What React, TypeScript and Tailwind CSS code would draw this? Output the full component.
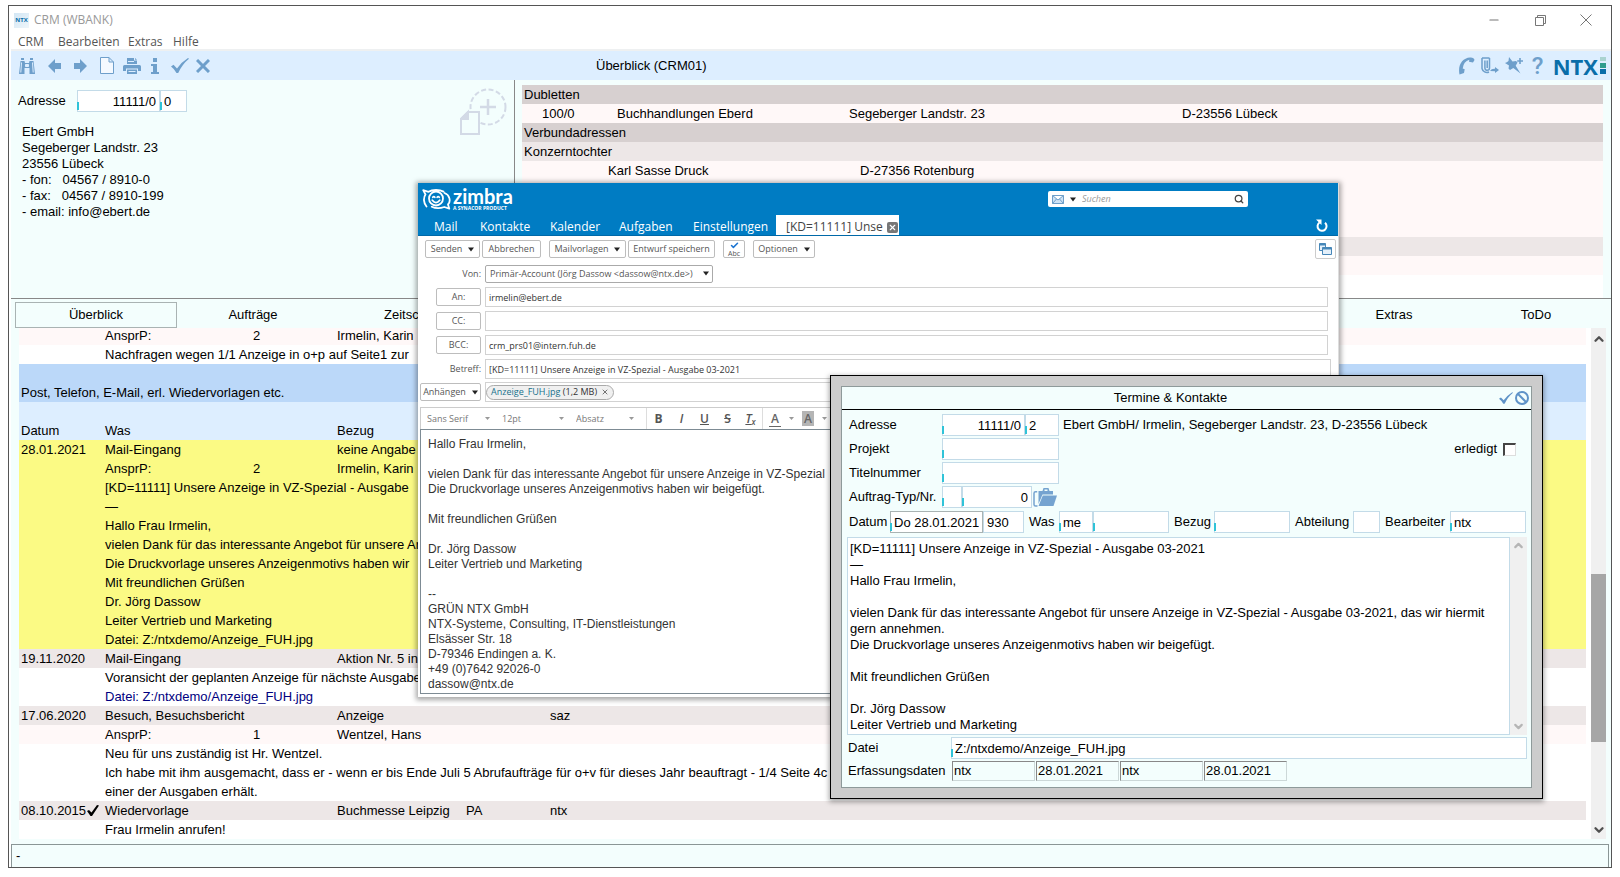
import React from 'react';
import { Check, ChevronDown, ChevronUp, Minus, Search, X } from 'lucide-react';

const crm = "font-['Liberation_Sans',Arial,sans-serif] text-[13px] text-black";
const segoe = "font-['Open_Sans','Noto_Sans',sans-serif]";

interface JournalRow {
  bg: string;
  date?: string;
  done?: boolean;
  text?: string;
  link?: boolean;
  cells?: [string, string, string, string, string];
}

const YELLOW = 'bg-[#fbfa84]';
const GREY = 'bg-[#ede7e7]';
const ROSE = 'bg-[#fff8f8]';
const BLUE = 'bg-[#bbd8f9]';
const PALE = 'bg-[#ddeeff]';
const WHITE = 'bg-white';

const journal: JournalRow[] = [
  { bg: ROSE, cells: ['AnsprP:', '2', 'Irmelin, Karin', '', ''] },
  { bg: WHITE, text: 'Nachfragen wegen 1/1 Anzeige in o+p auf Seite1 zur' },
  { bg: BLUE },
  { bg: BLUE, date: 'Post, Telefon, E-Mail, erl. Wiedervorlagen etc.' },
  { bg: PALE },
  { bg: PALE, date: 'Datum', cells: ['Was', '', 'Bezug', '', ''] },
  { bg: YELLOW, date: '28.01.2021', cells: ['Mail-Eingang', '', 'keine Angabe', '', ''] },
  { bg: YELLOW, cells: ['AnsprP:', '2', 'Irmelin, Karin', '', ''] },
  { bg: YELLOW, text: '[KD=11111] Unsere Anzeige in VZ-Spezial - Ausgabe' },
  { bg: YELLOW, text: '—' },
  { bg: YELLOW, text: 'Hallo Frau Irmelin,' },
  { bg: YELLOW, text: 'vielen Dank für das interessante Angebot für unsere An' },
  { bg: YELLOW, text: 'Die Druckvorlage unseres Anzeigenmotivs haben wir' },
  { bg: YELLOW, text: 'Mit freundlichen Grüßen' },
  { bg: YELLOW, text: 'Dr. Jörg Dassow' },
  { bg: YELLOW, text: 'Leiter Vertrieb und Marketing' },
  { bg: YELLOW, text: 'Datei: Z:/ntxdemo/Anzeige_FUH.jpg' },
  { bg: GREY, date: '19.11.2020', cells: ['Mail-Eingang', '', 'Aktion Nr. 5 in', '', ''] },
  { bg: WHITE, text: 'Voransicht der geplanten Anzeige für nächste Ausgabe' },
  { bg: WHITE, text: 'Datei: Z:/ntxdemo/Anzeige_FUH.jpg', link: true },
  { bg: GREY, date: '17.06.2020', cells: ['Besuch, Besuchsbericht', '', 'Anzeige', '', 'saz'] },
  { bg: ROSE, cells: ['AnsprP:', '1', 'Wentzel, Hans', '', ''] },
  { bg: WHITE, text: 'Neu für uns zuständig ist Hr. Wentzel.' },
  { bg: WHITE, text: 'Ich habe mit ihm ausgemacht, dass er - wenn er bis Ende Juli 5 Abrufaufträge für o+v für dieses Jahr beauftragt - 1/4 Seite 4c' },
  { bg: WHITE, text: 'einer der Ausgaben erhält.' },
  { bg: GREY, date: '08.10.2015', done: true, cells: ['Wiedervorlage', '', 'Buchmesse Leipzig', 'PA', 'ntx'] },
  { bg: WHITE, text: 'Frau Irmelin anrufen!' },
];

const mailBody = `Hallo Frau Irmelin,

vielen Dank für das interessante Angebot für unsere Anzeige in VZ-Spezial
Die Druckvorlage unseres Anzeigenmotivs haben wir beigefügt.

Mit freundlichen Grüßen

Dr. Jörg Dassow
Leiter Vertrieb und Marketing

--
GRÜN NTX GmbH
NTX-Systeme, Consulting, IT-Dienstleistungen
Elsässer Str. 18
D-79346 Endingen a. K.
+49 (0)7642 92026-0
dassow@ntx.de`;

const noteBody = `[KD=11111] Unsere Anzeige in VZ-Spezial - Ausgabe 03-2021
—
Hallo Frau Irmelin,

vielen Dank für das interessante Angebot für unsere Anzeige in VZ-Spezial - Ausgabe 03-2021, das wir hiermit
gern annehmen.
Die Druckvorlage unseres Anzeigenmotivs haben wir beigefügt.

Mit freundlichen Grüßen

Dr. Jörg Dassow
Leiter Vertrieb und Marketing`;

/* ---------- small parts ---------- */

interface FieldProps {
  id: string;
  width: string;
  value?: string;
  label?: string;
  tick?: boolean;
  right?: boolean;
  frame?: string;
}

// CRM entry field, the cyan tick marks a field with a lookup list
const Field: React.FC<FieldProps> = ({ id, width, value = '', label, tick, right, frame = 'border-[#c3dbe8]' }) => (
  <span className={`relative block h-[22px] shrink-0 ${width}`}>
    <input
      id={id}
      aria-label={label}
      defaultValue={value}
      className={`block h-full w-full border bg-white px-[3px] outline-none ${frame} ${right ? 'text-right' : ''}`}
    />
    {tick && <span className="absolute bottom-0.5 left-0 h-2 w-0.5 bg-[#2fc3d8]"></span>}
  </span>
);

const Caret = () => (
  <svg width="6" height="5" viewBox="0 0 6 5" className="shrink-0"><path d="M0 0.5h6L3 4.5z" fill="#222" /></svg>
);

const MailButton: React.FC<{ children: React.ReactNode; width: string; caret?: boolean }> = ({ children, width, caret }) => (
  <button className={`flex h-[18px] shrink-0 items-center justify-center gap-1.5 rounded-xs border border-[#bdbdbd] bg-white whitespace-nowrap ${width}`}>
    {children}
    {caret && <Caret />}
  </button>
);

const MailInput: React.FC<{ id: string; value?: string; label?: string }> = ({ id, value = '', label }) => (
  <input id={id} aria-label={label} defaultValue={value} className="h-5 min-w-0 flex-1 border border-[#d2d2d2] bg-white px-[3px] text-[#333] outline-none" />
);

const FormatSelect: React.FC<{ label: string; value: string; width: string }> = ({ label, value, width }) => (
  <span className={`relative flex items-center ${width}`}>
    <select aria-label={label} className="w-full appearance-none bg-transparent text-[#777] outline-none">
      <option>{value}</option>
    </select>
    <svg width="5" height="3" viewBox="0 0 5 3" className="pointer-events-none absolute right-3"><path d="M0 0h5L2.5 3z" fill="#999" /></svg>
  </span>
);

const NtxLogo = () => (
  <span className="flex items-center gap-0.5">
    <span className="font-['Open_Sans',sans-serif] text-[22px] leading-[22px] font-bold text-[#0a6ea9]">NTX</span>
    <svg width="6" height="17" viewBox="0 0 6 17">
      <rect width="6" height="4" fill="#a9d3d0" />
      <rect y="6" width="6" height="5" fill="#2e9c8e" />
      <rect y="12" width="6" height="5" fill="#0a6ea9" />
    </svg>
  </span>
);

const ZimbraMark = () => (
  <svg width="29" height="21" viewBox="0 0 29 21" fill="none" stroke="#fff" strokeWidth="1.8" strokeLinejoin="round" strokeLinecap="round">
    <path d="M4.500 17.500C1.500 14 1.200 8.500 3.500 5.500L1.200 1.200l5.300 1.600C8.500 1.500 11 1 14 1c3 0 5.500.500 7.500 1.600" />
    <path d="M22.500 4c5.500 2 6.500 8.500 3.500 11.500l1.300 4.200-5-1.700c-4 1.500-9 1.500-12.500-.300" />
    <circle cx="14" cy="9.500" r="7" />
    <path d="M10.800 8.300q1-1.300 2 0M15.200 8.300q1-1.300 2 0M10.300 11.300q3.700 4.500 7.400 0" />
  </svg>
);

/* ---------- main window ---------- */

const TitleBar = () => (
  <div className={`bg-white text-xs ${segoe}`}>
    <div className="flex h-7 items-center">
      <span className="ml-[3px] flex h-[15px] w-[15px] items-center justify-center bg-linear-to-br from-[#d3e6f4] to-[#eef5fa] text-[6px] font-bold text-[#0a6ea9]">NTX</span>
      <span className="ml-[5px] flex-1 text-[#999]">CRM (WBANK)</span>
      <div className="flex items-center gap-[34px] pr-[19px] text-[#777]">
        <button aria-label="Minimieren"><Minus size={14} strokeWidth={2} /></button>
        <button aria-label="Wiederherstellen">
          <svg width="11" height="11" viewBox="0 0 11 11" fill="none" stroke="currentColor"><path d="M.5 2.500h8v8h-8zM2.500 2.500v-2h8v8h-2" /></svg>
        </button>
        <button aria-label="Schließen">
          <svg width="12" height="12" viewBox="0 0 12 12" stroke="currentColor"><path d="M.5.5l11 11M11.500.5l-11 11" /></svg>
        </button>
      </div>
    </div>
    <nav className="flex h-[15px] items-center pl-[7px] leading-[13px] text-[#555]">
      <button className="w-10 text-left">CRM</button>
      <button className="w-[70px] text-left">Bearbeiten</button>
      <button className="w-[45px] text-left">Extras</button>
      <button>Hilfe</button>
    </nav>
  </div>
);

const Toolbar = () => (
  <div className="relative flex h-[31px] items-center border-t-2 border-[#eef0f1] bg-[#ddeeff] text-[#6e9fcb]">
    <div className="flex flex-1 items-center">
      <button aria-label="Suchen" className="w-[37px] pl-2">
        <svg width="16" height="16" viewBox="0 0 16 16" fill="currentColor">
          <path d="M2 0h3v2H2zM11 0h3v2h-3zM1.500 3h4l.5 2h4l.5-2h4L16 16h-5.500v-6h-5v6H0z" />
          <path d="M6.500 6.500h3v2h-3zM2.500 4.500l-.7 10M13.500 4.500l.7 10" stroke="#ddeeff" fill="#ddeeff" />
        </svg>
      </button>
      <button aria-label="Zurück" className="w-[26px]">
        <svg width="13" height="14" viewBox="0 0 13 14" fill="currentColor"><path d="M0 7L7 0v4h6v6H7v4z" /></svg>
      </button>
      <button aria-label="Vor" className="w-[26px]">
        <svg width="13" height="14" viewBox="0 0 13 14" fill="currentColor"><path d="M13 7L6 0v4H0v6h6v4z" /></svg>
      </button>
      <button aria-label="Neu" className="w-[23px]">
        <svg width="14" height="17" viewBox="0 0 14 17" fill="#f4f9ff" stroke="currentColor"><path d="M.5.5h8.500l4.500 4.500v11.500H.5zM9 .5V5h4.500" /></svg>
      </button>
      <button aria-label="Drucken" className="w-7">
        <svg width="18" height="16" viewBox="0 0 18 16" fill="currentColor">
          <path d="M4 0h7v2.500h3V6H4zM12 0l2 1.800h-2z" />
          <path d="M1.500 7h15Q18 7 18 8.500V13h-3v-2.500H3V13H0V8.500Q0 7 1.500 7z" />
          <path d="M4 11.500h10V16H4z" />
          <path d="M5.500 13.500h7M5 3.500h6" stroke="#ddeeff" />
        </svg>
      </button>
      <button aria-label="Info" className="w-5">
        <svg width="8" height="16" viewBox="0 0 8 16" fill="currentColor"><path d="M2 0h4v4H2zM0 6h6v8h2v2H0v-2h2V8H0z" /></svg>
      </button>
      <button aria-label="Übernehmen" className="w-[25px]">
        <svg width="18" height="15" viewBox="0 0 18 15" fill="currentColor"><path d="M0 8.500l2.500-1.700L6 10.500Q10.500 4 17 0l1 .8Q11.500 6 7.200 15H5.500Q3.500 11 0 8.500z" /></svg>
      </button>
      <button aria-label="Abbrechen">
        <svg width="14" height="14" viewBox="0 0 14 14" stroke="currentColor" strokeWidth="3"><path d="M1 1l12 12M13 1L1 13" /></svg>
      </button>
    </div>
    <h1 className="absolute left-[585px] text-black">Überblick (CRM01)</h1>
    <div className="flex items-center gap-1.5 pr-[5px]">
      <button aria-label="Telefon">
        <svg width="17" height="18" viewBox="0 0 17 18" fill="currentColor"><path d="M1.500 17.500C-.5 8 4.500 1 12 .5q4-.3 4.500 2.500l-1.500 2.500-4-.7.300-2Q5.500 4.500 4.700 11.500l2 .8-.7 3.700z" /></svg>
      </button>
      <button aria-label="Anhang">
        <svg width="18" height="17" viewBox="0 0 18 17" fill="none" stroke="currentColor" strokeWidth="1.500">
          <path d="M8.500 1v10a2.300 2.300 0 0 1-4.600 0V3.500M6.200 3.500v7.500M1 1h7.500M1 1v10.500a5 5 0 0 0 7 3.500" />
          <path d="M9 14q1.500-2.500 5-2.200V10l4 3-4 3v-1.700q-3-.3-5-.3z" fill="currentColor" stroke="none" />
        </svg>
      </button>
      <button aria-label="Anheften">
        <svg width="18" height="17" viewBox="0 0 18 17" fill="currentColor">
          <path d="M4 0l3.500 4.500 3.500-.5 1.500 1.500-1.800 3.200 4.800 7.800-7.200-5.600L5 13l-1.500-1.500.5-3L0 6l1.800-.8L3.500 4z" />
          <path d="M12.200 3.200h2V1h1.600v2.200H18v1.600h-2.200V7h-1.600V4.800h-2z" />
        </svg>
      </button>
      <button aria-label="Hilfe" className="w-[18px] font-['Roboto',sans-serif] text-2xl leading-6 font-medium">?</button>
      <NtxLogo />
    </div>
  </div>
);

const AddressPanel = () => (
  <section className="w-[504px] border-r border-[#888] pt-2.5">
    <div className="flex items-start justify-between">
      <div className="flex items-center">
        <label htmlFor="adresse" className="w-[66px] pl-[7px]">Adresse</label>
        <Field id="adresse" width="w-[83px]" value="11111/0" tick right />
        <Field id="adresse-nr" label="Adresse Nr." width="w-[27px]" value="0" tick />
      </div>
      <svg width="48" height="48" viewBox="0 0 48 48" fill="none" stroke="#d3dae6" strokeWidth="2" className="mr-1.5 -mt-0.5">
        <circle cx="28" cy="19" r="17.500" strokeDasharray="5 2.500" />
        <path d="M28 11v16M20 19h16" strokeWidth="2.500" />
        <path d="M8 24h11v22H1V31z" fill="#f3fefd" />
        <path d="M8 24v7H1z" fill="#d3dae6" />
      </svg>
    </div>
    <address className="-mt-3 pl-[11px] leading-4 whitespace-pre not-italic">
      {'Ebert GmbH\nSegeberger Landstr. 23\n23556 Lübeck\n- fon:   04567 / 8910-0\n- fax:   04567 / 8910-199\n- email: info@ebert.de'}
    </address>
  </section>
);

const RelatedAddresses = () => (
  <section className="flex-1 pt-[5px] pr-2 pl-[7px]">
    <div className="h-full bg-white">
      <table className="w-full table-fixed border-collapse text-left leading-[19px] whitespace-nowrap">
        <colgroup>
          <col className="w-[86px]" />
          <col className="w-[241px]" />
          <col className="w-[333px]" />
          <col />
        </colgroup>
        <tbody>
          <tr className="h-[19px] bg-[#d7d0d0]"><th colSpan={4} className="p-0 pl-0.5 font-normal">Dubletten</th></tr>
          <tr className="h-[19px] bg-[#fff8f8]">
            <td className="p-0 pl-5">100/0</td>
            <td className="p-0 pl-[9px]">Buchhandlungen Eberd</td>
            <td className="p-0">Segeberger Landstr. 23</td>
            <td className="p-0">D-23556 Lübeck</td>
          </tr>
          <tr className="h-[19px] bg-[#d7d0d0]"><th colSpan={4} className="p-0 pl-0.5 font-normal">Verbundadressen</th></tr>
          <tr className="h-[19px] bg-[#ede7e7]"><th colSpan={4} className="p-0 pl-0.5 font-normal">Konzerntochter</th></tr>
          <tr className="h-[19px] bg-[#fff8f8]">
            <td className="p-0"></td>
            <td className="p-0">Karl Sasse Druck</td>
            <td className="p-0 pl-[11px]">D-27356 Rotenburg</td>
            <td className="p-0"></td>
          </tr>
          <tr className="h-[57px] bg-[#fff8f8]"><td colSpan={4}></td></tr>
          <tr className="h-[19px] bg-[#ede7e7]"><td colSpan={4} className="p-0"></td></tr>
          <tr className="h-[19px] bg-[#fff8f8]"><td colSpan={4} className="p-0"></td></tr>
        </tbody>
      </table>
    </div>
  </section>
);

const Journal = () => (
  <div className="flex h-[511px] pr-[5px] pl-2">
    <div className="flex-1 overflow-hidden bg-white pr-[5px]">
      <table className="-mt-0.5 w-full table-fixed border-collapse text-left leading-[19px] whitespace-nowrap">
        <colgroup>
          <col className="w-[86px]" />
          <col className="w-[148px]" />
          <col className="w-[84px]" />
          <col className="w-[129px]" />
          <col className="w-[84px]" />
          <col />
        </colgroup>
        <tbody>
          {journal.map((row, i) => (
            <tr key={i} className={`h-[19px] ${row.bg}`}>
              <td className="p-0 pl-0.5">
                {row.date}
                {row.done && (
                  <svg width="12" height="11" viewBox="0 0 12 11" className="ml-px inline-block align-[-1px]"><path d="M0 6l2-1 2.500 2.500L10 0l2 .5L5 11H3.500z" /></svg>
                )}
              </td>
              {row.cells
                ? row.cells.map((cell, c) => <td key={c} className="p-0">{cell}</td>)
                : <td colSpan={5} className={row.link ? 'p-0 text-[#000080]' : 'p-0'}>{row.text}</td>}
            </tr>
          ))}
        </tbody>
      </table>
    </div>
    <div className="flex w-[15px] flex-col items-center bg-[#f0f0f0]">
      <ChevronUp size={14} strokeWidth={4} className="mt-1 text-[#505050]" />
      <div className="mt-[228px] h-[168px] w-full bg-[#a6a6a6]"></div>
      <ChevronDown size={14} strokeWidth={4} className="mt-auto mb-0.5 text-[#505050]" />
    </div>
  </div>
);

/* ---------- mail window ---------- */

const mailTabs = [
  { name: 'Mail', width: 'w-[46px]' },
  { name: 'Kontakte', width: 'w-[70px]' },
  { name: 'Kalender', width: 'w-[69px]' },
  { name: 'Aufgaben', width: 'w-[74px]' },
  { name: 'Einstellungen', width: 'w-[83px]' },
];

const MailWindow = () => (
  <section className={`absolute top-[183px] left-[418px] w-[921px] border-r border-[#ddd] bg-white text-[9px] text-[#555] shadow-[0_1px_5px_2px_rgba(0,0,0,0.35)] ${segoe}`}>
    <header className="flex h-[53px] flex-col border-b border-[#0069a8] bg-[#007cc3] text-white">
      <div className="flex h-[33px] items-center pl-1">
        <ZimbraMark />
        <div className="ml-0.5 flex-1">
          <div className="font-['Lato',sans-serif] text-xl leading-4 font-bold">zimbra</div>
          <div className="mt-0.5 text-[5px] leading-[5px] font-bold">A SYNACOR PRODUCT</div>
        </div>
        <div className="mr-[90px] flex h-4 w-[200px] items-center rounded-xs bg-white px-1">
          <svg width="12" height="9" viewBox="0 0 12 9" fill="#cfe3f5" stroke="#6f9fc9"><path d="M.5.5h11v8H.5zM.5.5L6 5l5.500-4.500M.5 8.500L4.500 4M11.500 8.500L7.500 4" /></svg>
          <span className="mx-1.5 flex"><Caret /></span>
          <input aria-label="Suchen" placeholder="Suchen" className="min-w-0 flex-1 italic outline-none placeholder:text-[#999]" />
          <Search size={10} strokeWidth={3} className="text-[#444]" />
        </div>
      </div>
      <nav className="flex h-5 items-center pl-4 text-xs">
        {mailTabs.map((tab) => (
          <button key={tab.name} className={`h-5 pt-1 text-left leading-4 ${tab.width}`}>{tab.name}</button>
        ))}
        <button className="flex h-5 w-[123px] items-center gap-1 bg-white pt-1 pl-2.5 text-[#444]">
          [KD=11111] Unse
          <span className="flex h-[11px] w-[11px] items-center justify-center rounded-xs bg-[#777] text-white"><X size={9} strokeWidth={3} /></span>
        </button>
        <button aria-label="Aktualisieren" className="mr-2.5 ml-auto">
          <svg width="12" height="13" viewBox="0 0 12 13" fill="none" stroke="#fff" strokeWidth="2"><path d="M3.500 3.500A4.500 4.500 0 1 0 9 3.800" /><path d="M0 .5h5.500V6z" fill="#fff" stroke="none" /></svg>
        </button>
      </nav>
    </header>

    <div className="flex h-[26px] items-center pr-0.5 pl-[7px]">
      <MailButton width="w-[55px]" caret>Senden</MailButton>
      <span className="w-0.5"></span>
      <MailButton width="w-[59px]">Abbrechen</MailButton>
      <span className="w-2"></span>
      <MailButton width="w-[77px]" caret>Mailvorlagen</MailButton>
      <span className="w-0.5"></span>
      <MailButton width="w-[87px]">Entwurf speichern</MailButton>
      <span className="w-2"></span>
      <button aria-label="Rechtschreibung" className="flex h-[18px] w-[22px] flex-col items-center rounded-xs border border-[#bdbdbd] text-[7px] leading-[7px]">
        <Check size={9} strokeWidth={4} className="text-[#1b74d1]" />
        Abc
      </button>
      <span className="w-2"></span>
      <MailButton width="w-[62px]" caret>Optionen</MailButton>
      <button aria-label="In neuem Fenster" className="ml-auto flex h-5 w-[21px] items-center justify-center rounded-xs border border-[#ccc]">
        <svg width="13" height="12" viewBox="0 0 13 12" fill="#e4f0fa" stroke="#4787b8"><path d="M.5.5h6v7h-6z" /><path d="M3.500 4.500h9v7h-9z" /><path d="M.5 1.500h6M3.500 5.500h9" strokeWidth="2" /></svg>
      </button>
    </div>

    <div className="flex h-[23px] items-center">
      <label htmlFor="von" className="w-[63px] text-right">Von:</label>
      <span className="relative ml-1 flex w-[228px] items-center">
        <select id="von" className="h-[18px] w-full appearance-none rounded-xs border border-[#aaa] bg-white pl-1 outline-none">
          <option>Primär-Account (Jörg Dassow &lt;dassow@ntx.de&gt;)</option>
        </select>
        <span className="pointer-events-none absolute right-1"><Caret /></span>
      </span>
    </div>
    <div className="flex h-6 items-center pr-[10px] pl-[18px]">
      <MailButton width="w-[45px] mr-1">An:</MailButton>
      <MailInput id="an" label="An" value="irmelin@ebert.de" />
    </div>
    <div className="flex h-6 items-center pr-[10px] pl-[18px]">
      <MailButton width="w-[45px] mr-1">CC:</MailButton>
      <MailInput id="cc" label="CC" />
    </div>
    <div className="flex h-6 items-center pr-[10px] pl-[18px]">
      <MailButton width="w-[45px] mr-1">BCC:</MailButton>
      <MailInput id="bcc" label="BCC" value="crm_prs01@intern.fuh.de" />
    </div>
    <div className="flex h-6 items-center pr-[7px]">
      <label htmlFor="betreff" className="mr-1 w-[63px] text-right">Betreff:</label>
      <MailInput id="betreff" value="[KD=11111] Unsere Anzeige in VZ-Spezial - Ausgabe 03-2021" />
    </div>
    <div className="flex h-[22px] items-center pr-[7px] pl-0.5">
      <MailButton width="w-[61px] mr-1" caret>Anhängen</MailButton>
      <div className="flex h-5 flex-1 items-center border border-[#d2d2d2]">
        <span className="flex h-[15px] items-center gap-1 rounded-full border border-[#aaa] bg-[#f0f0f0] px-1 text-[#333]">
          <span><a href="#anzeige" className="text-[#17708c]">Anzeige_FUH.jpg</a> (1,2 MB)</span>
          <button aria-label="Anhang entfernen"><X size={8} strokeWidth={2} /></button>
        </span>
      </div>
    </div>

    <div className="px-0.5 pt-1">
      <div className="flex h-[22px] items-stretch border-t border-l border-[#ccc] pl-1.5">
        <FormatSelect label="Schriftart" value="Sans Serif" width="w-[75px]" />
        <FormatSelect label="Größe" value="12pt" width="w-[74px]" />
        <FormatSelect label="Absatzformat" value="Absatz" width="w-[70px]" />
        <div className="flex border-x border-[#ddd] text-xs text-[#555]">
          <button className="w-[23px] font-bold">B</button>
          <button className="w-[23px] font-semibold italic">I</button>
          <button className="w-[23px] font-semibold underline">U</button>
          <button className="w-[23px] font-semibold line-through">S</button>
          <button className="w-[23px] font-semibold italic underline">T<sub className="text-[8px] no-underline">x</sub></button>
        </div>
        <div className="flex items-center gap-2 pl-1.5 text-xs font-semibold text-[#666]">
          <button className="h-4 w-3 border-b border-[#666] leading-4">A</button>
          <svg width="5" height="3" viewBox="0 0 5 3"><path d="M0 0h5L2.500 3z" fill="#999" /></svg>
          <button className="h-[15px] w-3 bg-[#b5b5b5] leading-4">A</button>
          <svg width="5" height="3" viewBox="0 0 5 3"><path d="M0 0h5L2.500 3z" fill="#999" /></svg>
        </div>
      </div>
      <textarea
        aria-label="Nachricht"
        defaultValue={mailBody}
        className="block h-[265px] w-full resize-none overflow-hidden border border-[#7d8b94] bg-white px-[7px] pt-[7px] font-['Liberation_Sans',sans-serif] text-xs leading-[15px] whitespace-pre text-[#333] outline-none"
      />
      <div className="h-[3px]"></div>
    </div>
  </section>
);

/* ---------- appointment dialog ---------- */

const ContactDialog = () => (
  <section className="absolute top-[375px] left-[830px] w-[713px] border border-black bg-[#cccccc] p-2.5 shadow-[0_2px_5px_1px_rgba(0,0,0,0.35)]">
    <div className="border border-[#8e9a9a] bg-[#f3fefd]">
      <header className="relative flex h-[23px] items-center justify-center border-b border-black">
        <h2 className="pr-8">Termine &amp; Kontakte</h2>
        <div className="absolute right-0.5 flex items-center gap-0.5 text-[#5f93c8]">
          <button aria-label="Speichern">
            <svg width="14" height="12" viewBox="0 0 18 15" fill="currentColor"><path d="M0 8.500l2.500-1.700L6 10.500Q10.500 4 17 0l1 .8Q11.500 6 7.200 15H5.500Q3.500 11 0 8.500z" /></svg>
          </button>
          <button aria-label="Verwerfen">
            <svg width="14" height="14" viewBox="0 0 14 14" fill="none" stroke="currentColor" strokeWidth="2"><circle cx="7" cy="7" r="6" /><path d="M2.800 2.800l8.400 8.400" /></svg>
          </button>
        </div>
      </header>

      <div className="flex flex-col gap-0.5 pt-1 pr-[3px] pl-[7px]">
        <div className="flex items-center">
          <label htmlFor="d-adresse" className="w-[93px]">Adresse</label>
          <Field id="d-adresse" width="w-[83px]" value="11111/0" tick right />
          <Field id="d-adresse-nr" label="Adresse Nr." width="w-[34px]" value="2" tick />
          <span className="ml-1 whitespace-nowrap">Ebert GmbH/ Irmelin, Segeberger Landstr. 23, D-23556 Lübeck</span>
        </div>
        <div className="flex items-center">
          <label htmlFor="d-projekt" className="w-[93px]">Projekt</label>
          <Field id="d-projekt" width="w-[117px]" tick />
          <label htmlFor="d-erledigt" className="mr-1.5 ml-auto">erledigt</label>
          <input id="d-erledigt" type="checkbox" className="mr-3 h-[13px] w-[13px] appearance-none border-t-2 border-r border-b border-l-2 border-t-[#444] border-r-[#ddd] border-b-[#ddd] border-l-[#444] bg-white" />
        </div>
        <div className="flex items-center">
          <label htmlFor="d-titel" className="w-[93px]">Titelnummer</label>
          <Field id="d-titel" width="w-[117px]" tick />
        </div>
        <div className="flex items-center">
          <label htmlFor="d-auftrag" className="w-[93px] whitespace-nowrap">Auftrag-Typ/Nr.</label>
          <Field id="d-auftrag" width="w-[20px]" tick />
          <Field id="d-auftrag-nr" label="Auftrag-Nr." width="w-[70px]" value="0" tick right />
          <button aria-label="Auftrag öffnen" className="ml-px text-[#75a3d0]">
            <svg width="24" height="19" viewBox="0 0 24 19" fill="currentColor">
              <path d="M5.500 4V3h4L10.500 0h5l1 3H20v3.500H9.500L5.500 16z" />
              <path d="M9.800 7.500H24L20.500 18H5.500z" />
              <path d="M4.200 3.800H2.500Q1 3.800 1 5.300V16.500Q1 18 2.500 18h2" fill="none" stroke="currentColor" strokeWidth="1.500" />
              <path d="M11.500 3h3V1.500h-3z" fill="#f3fefd" />
            </svg>
          </button>
        </div>
        <div className="mt-px flex items-center">
          <label htmlFor="d-datum" className="w-[41px]">Datum</label>
          <Field id="d-datum" width="w-[93px]" value="Do 28.01.2021" tick frame="border-[#a9b3b3]" />
          <Field id="d-zeit" label="Uhrzeit" width="w-[41px]" value="930" />
          <label htmlFor="d-was" className="w-[35px] pl-[5px]">Was</label>
          <Field id="d-was" width="w-[34px]" value="me" tick />
          <Field id="d-was-text" label="Was Text" width="w-[76px]" tick />
          <label htmlFor="d-bezug" className="w-[45px] pl-[5px]">Bezug</label>
          <Field id="d-bezug" width="w-[76px]" tick />
          <label htmlFor="d-abt" className="w-[63px] pl-[5px]">Abteilung</label>
          <Field id="d-abt" width="w-[27px]" />
          <label htmlFor="d-bearb" className="w-[70px] pl-[5px]">Bearbeiter</label>
          <Field id="d-bearb" width="w-[76px]" value="ntx" tick />
        </div>
      </div>

      <div className="mt-1 mr-1 ml-[5px] flex h-[198px]">
        <textarea
          aria-label="Notiz"
          defaultValue={noteBody}
          className="block h-full min-w-0 flex-1 resize-none overflow-hidden border border-[#c3dbe8] bg-white px-0.5 pt-[3px] leading-4 whitespace-pre outline-none"
        />
        <div className="flex w-[17px] flex-col items-center justify-between bg-[#f0f0f0] py-0.5 text-[#b5b5b5]">
          <ChevronUp size={13} strokeWidth={4} />
          <ChevronDown size={13} strokeWidth={4} />
        </div>
      </div>

      <div className="mt-0.5 mr-[3px] flex items-center pl-1.5">
        <label htmlFor="d-datei" className="w-[103px]">Datei</label>
        <Field id="d-datei" width="w-[576px]" value="Z:/ntxdemo/Anzeige_FUH.jpg" tick />
      </div>
      <div className="mt-0.5 mb-1.5 flex h-5 items-center pl-1.5">
        <span className="w-[104px]">Erfassungsdaten</span>
        {['ntx', '28.01.2021', 'ntx', '28.01.2021'].map((value, i) => (
          <span key={i} className="mr-px h-5 w-[83px] border border-t-[#888] border-r-[#ccd8d8] border-b-[#ccd8d8] border-l-[#888] pl-px leading-[18px]">{value}</span>
        ))}
      </div>
    </div>
  </section>
);

const App: React.FC = () => {
  return (
    <div className={`relative flex min-h-screen flex-col bg-white px-2 pt-[5px] pb-[9px] ${crm}`}>
      <main className="flex flex-1 flex-col border border-[#555] pl-0.5">
        <TitleBar />
        <Toolbar />
        <div className="flex flex-1 flex-col bg-[#f3fefd]">
          <div className="flex h-[219px] border-b border-[#888]">
            <AddressPanel />
            <RelatedAddresses />
          </div>
          <nav className="flex h-[29px] items-end pl-1">
            <button className="h-[26px] w-[162px] border border-[#a9b3b3]">Überblick</button>
            <button className="h-[26px] w-[152px]">Aufträge</button>
            <button className="h-[26px] pl-[55px]">Zeitsc</button>
            <button className="ml-auto h-[26px] w-[142px]">Extras</button>
            <button className="mr-1 h-[26px] w-[142px]">ToDo</button>
          </nav>
          <Journal />
          <footer className="mt-auto mr-0.5 h-[23px] border border-b-0 border-[#8a9696] pl-1 leading-[22px]">-</footer>
        </div>
      </main>
      <MailWindow />
      <ContactDialog />
    </div>
  );
};

export default App;
